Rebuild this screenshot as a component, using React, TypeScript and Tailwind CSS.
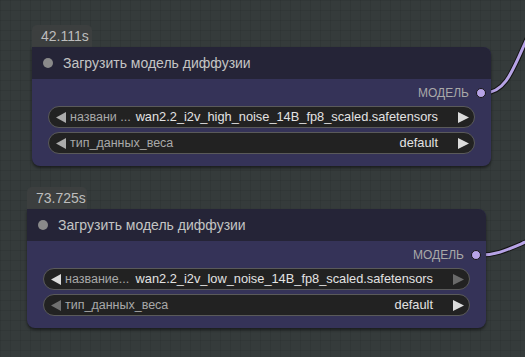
import React from "react";

type NodeProps = {
  left: number;
  top: number;
  time: string;
  label: string;
  value: string;
  leftArrows: [string, string];
  rightArrows: [string, string];
};

function ArrowLeft({ color }: { color: string }) {
  return (
    <svg width="10" height="11" viewBox="0 0 10 11" className="shrink-0">
      <polygon points="10,0 10,11 0,5.5" fill={color} />
    </svg>
  );
}

function ArrowRight({ color }: { color: string }) {
  return (
    <svg width="11" height="11" viewBox="0 0 11 11" className="shrink-0">
      <polygon points="0,0 0,11 11,5.5" fill={color} />
    </svg>
  );
}

function Widget({
  label,
  value,
  leftColor,
  rightColor,
}: {
  label: string;
  value: string;
  leftColor: string;
  rightColor: string;
}) {
  return (
    <div className="flex h-[22px] items-center rounded-full border border-[#5a5a5a] bg-[#222222] pl-[7px] pr-[5px]">
      <ArrowLeft color={leftColor} />
      <span className="ml-[4px] whitespace-nowrap text-[12.5px] text-[#a9a9a9]">{label}</span>
      <span className="ml-auto whitespace-nowrap text-[12.8px] text-[#e2e2e2]">{value}</span>
      <span className="ml-[20px]">
        <ArrowRight color={rightColor} />
      </span>
    </div>
  );
}

function LoaderNode({ left, top, time, label, value, leftArrows, rightArrows }: NodeProps) {
  return (
    <div className="absolute flex flex-col" style={{ left, top }}>
      <div className="flex h-[22px] w-[60px] items-center rounded-t-[5px] bg-[#3c3f3f] pl-[9px] text-[14px] text-[#bdbdbd]">
        {time}
      </div>
      <div className="w-[459px] rounded-lg rounded-tl-none bg-[#353358] shadow-[0_2px_3px_rgba(0,0,0,0.5)]">
        <div className="flex h-[32px] items-center rounded-tr-lg bg-[#252437] pl-[11px]">
          <span className="h-[10px] w-[10px] rounded-full bg-[#8a8a8a]" />
          <span className="ml-[10px] text-[14px] text-[#c4c4c4]">Загрузить модель диффузии</span>
        </div>
        <div className="flex h-[27px] items-center justify-end pr-[5px]">
          <span className="text-[12px] text-[#a9a9a9]">МОДЕЛЬ</span>
          <span className="ml-[7px] h-[10px] w-[10px] rounded-full border border-[#161616] bg-[#b7a3e6]" />
        </div>
        <div className="flex flex-col gap-[4px] px-[16px] pb-[12px]">
          <Widget label={label} value={value} leftColor={leftArrows[0]} rightColor={rightArrows[0]} />
          <Widget label="тип_данных_веса" value="default" leftColor={leftArrows[1]} rightColor={rightArrows[1]} />
        </div>
      </div>
    </div>
  );
}

export default function App() {
  return (
    <div className="relative h-[357px] w-[525px] overflow-hidden bg-[#353b3b] bg-[linear-gradient(rgba(0,0,0,0.07)_1px,transparent_1px),linear-gradient(90deg,rgba(0,0,0,0.07)_1px,transparent_1px)] bg-[size:10px_10px] font-['Liberation_Sans',Arial,sans-serif]">
      <svg className="absolute left-0 top-0" width="525" height="357">
        <path d="M484 93 C510 93, 515 60, 537 18" stroke="#141414" strokeWidth="5" fill="none" />
        <path d="M484 93 C510 93, 515 60, 537 18" stroke="#b7a3e6" strokeWidth="3" fill="none" />
        <path d="M480 255 C500 255, 510 248, 540 236" stroke="#141414" strokeWidth="5" fill="none" />
        <path d="M480 255 C500 255, 510 248, 540 236" stroke="#b7a3e6" strokeWidth="3" fill="none" />
      </svg>
      <LoaderNode
        left={32}
        top={25}
        time="42.111s"
        label="названи ..."
        value="wan2.2_i2v_high_noise_14B_fp8_scaled.safetensors"
        leftArrows={["#ababab", "#ababab"]}
        rightArrows={["#dcdcdc", "#dcdcdc"]}
      />
      <LoaderNode
        left={27}
        top={187}
        time="73.725s"
        label="название..."
        value="wan2.2_i2v_low_noise_14B_fp8_scaled.safetensors"
        leftArrows={["#dcdcdc", "#707070"]}
        rightArrows={["#6a6a6a", "#dcdcdc"]}
      />
    </div>
  );
}
